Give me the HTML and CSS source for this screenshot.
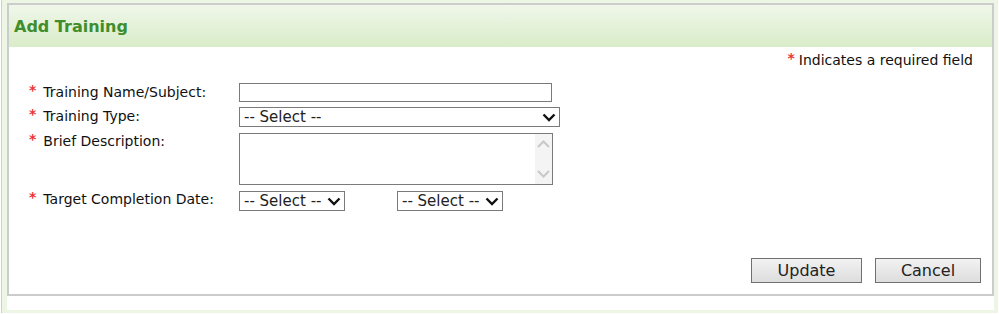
FILE: index.html
```html
<!DOCTYPE html>
<html lang="en">
<head>
  <meta charset="UTF-8">
  <title>Add Training</title>
  <link rel="stylesheet" href="styles.css">
</head>
<body>
  <div class="frame">
    <div class="sheet">
      <div class="panel">
        <div class="panel-header">Add Training</div>
        <div class="panel-body">
          <div class="required-note"><span class="req">*</span>Indicates a required field</div>

          <div class="form-grid">
            <label class="field-label"><span class="req">*</span>Training Name/Subject:</label>
            <div class="field"><input type="text" class="text-input"></div>

            <label class="field-label"><span class="req">*</span>Training Type:</label>
            <div class="field">
              <span class="select-wrap select-wide">
                <select><option>-- Select --</option></select>
                <svg class="chev" width="14" height="9" viewBox="0 0 14 9"><path d="M1.5 1.5 L7 7 L12.5 1.5" fill="none" stroke="#111" stroke-width="2.4"/></svg>
              </span>
            </div>

            <label class="field-label"><span class="req">*</span>Brief Description:</label>
            <div class="field">
              <div class="textarea-wrap">
                <textarea></textarea>
                <div class="fake-scroll">
                  <svg width="17" height="17" viewBox="0 0 17 17"><path d="M3 11 L8.5 5.5 L14 11" fill="none" stroke="#c8c8c8" stroke-width="2"/></svg>
                  <svg width="17" height="17" viewBox="0 0 17 17"><path d="M3 6 L8.5 11.5 L14 6" fill="none" stroke="#c8c8c8" stroke-width="2"/></svg>
                </div>
              </div>
            </div>

            <label class="field-label"><span class="req">*</span>Target Completion Date:</label>
            <div class="field date-field">
              <span class="select-wrap select-small">
                <select><option>-- Select --</option></select>
                <svg class="chev" width="14" height="9" viewBox="0 0 14 9"><path d="M1.5 1.5 L7 7 L12.5 1.5" fill="none" stroke="#111" stroke-width="2.4"/></svg>
              </span>
              <span class="select-wrap select-small">
                <select><option>-- Select --</option></select>
                <svg class="chev" width="14" height="9" viewBox="0 0 14 9"><path d="M1.5 1.5 L7 7 L12.5 1.5" fill="none" stroke="#111" stroke-width="2.4"/></svg>
              </span>
            </div>
          </div>

          <div class="actions">
            <button class="btn btn-update">Update</button>
            <button class="btn btn-cancel">Cancel</button>
          </div>
        </div>
      </div>
    </div>
  </div>
</body>
</html>
```

FILE: styles.css
```css
/* Add Training form */
html, body {
  margin: 0;
  padding: 0;
  background-color: #ffffff;
}
body {
  font-family: "DejaVu Sans", Verdana, sans-serif;
  color: #111111;
}
.frame {
  margin-left: 1px;
  width: 997px;
  height: 313px;
  box-sizing: border-box;
  border-left: 1px solid #d0d0d0;
  background-color: #edf5e4;
  padding: 3px 4px 3px 5px;
}
.sheet {
  background-color: #ffffff;
  height: 100%;
}
.panel {
  border: 2px solid #cccccc;
  height: 293px;
  box-sizing: border-box;
  display: flex;
  flex-direction: column;
}
.panel-header {
  height: 42px;
  line-height: 42px;
  padding-left: 5px;
  padding-top: 1px;
  box-sizing: border-box;
  font-size: 16px;
  font-weight: bold;
  color: #3f8d2c;
  background: linear-gradient(to bottom, #f0f7ea, #d9ecc9);
}
.panel-body {
  flex: 1;
  display: flex;
  flex-direction: column;
  padding: 5px 11px 11px 20px;
}
.required-note {
  text-align: right;
  font-size: 14px;
  line-height: 17px;
  padding-right: 8px;
}
.required-note .req {
  margin-right: 4px;
}
.req {
  color: #e8353a;
  font-size: 14px;
  font-weight: bold;
  margin-right: 7px;
  vertical-align: top;
  position: relative;
  top: -2px;
}
.form-grid {
  margin-top: 14px;
  display: grid;
  grid-template-columns: 210px auto;
  row-gap: 5px;
  align-items: start;
}
.field-label {
  font-size: 14px;
  line-height: 17px;
  padding-top: 1px;
  white-space: nowrap;
}
.field {
  display: flex;
}
.text-input {
  width: 313px;
  height: 19px;
  box-sizing: border-box;
  border: 1px solid #7a7a7a;
  margin: 0;
  padding: 0 4px;
}
.select-wrap {
  position: relative;
  display: inline-block;
}
.select-wrap select {
  appearance: none;
  -webkit-appearance: none;
  height: 20px;
  box-sizing: border-box;
  border: 1px solid #7a7a7a;
  border-radius: 0;
  background: #ffffff;
  margin: 0;
  padding: 0 0 0 4px;
  font-family: "DejaVu Sans", Verdana, sans-serif;
  font-size: 15px;
  line-height: 18px;
  color: #222;
}
.select-wide select {
  width: 321px;
}
.select-small select {
  width: 106px;
}
.chev {
  position: absolute;
  right: 4px;
  top: 6px;
  pointer-events: none;
}
.date-field {
  gap: 52px;
  margin-top: 1px;
}
.textarea-wrap {
  display: flex;
  width: 314px;
  height: 52px;
  box-sizing: border-box;
  border: 1px solid #7a7a7a;
  margin-top: 1px;
}
.textarea-wrap textarea {
  flex: 1;
  border: none;
  outline: none;
  resize: none;
  margin: 0;
  padding: 2px;
}
.fake-scroll {
  width: 17px;
  background-color: #f4f4f4;
  display: flex;
  flex-direction: column;
  justify-content: space-between;
  padding: 2px 0;
}
.fake-scroll svg {
  display: block;
}
.actions {
  margin-top: auto;
  display: flex;
  justify-content: flex-end;
  gap: 13px;
}
.btn {
  height: 25px;
  font-family: "DejaVu Sans", Verdana, sans-serif;
  font-size: 16px;
  color: #222;
  border: 1px solid #707070;
  border-radius: 0;
  background: linear-gradient(to bottom, #f2f2f2, #dddddd);
  padding: 0;
}
.btn-update {
  width: 111px;
}
.btn-cancel {
  width: 106px;
}
```
